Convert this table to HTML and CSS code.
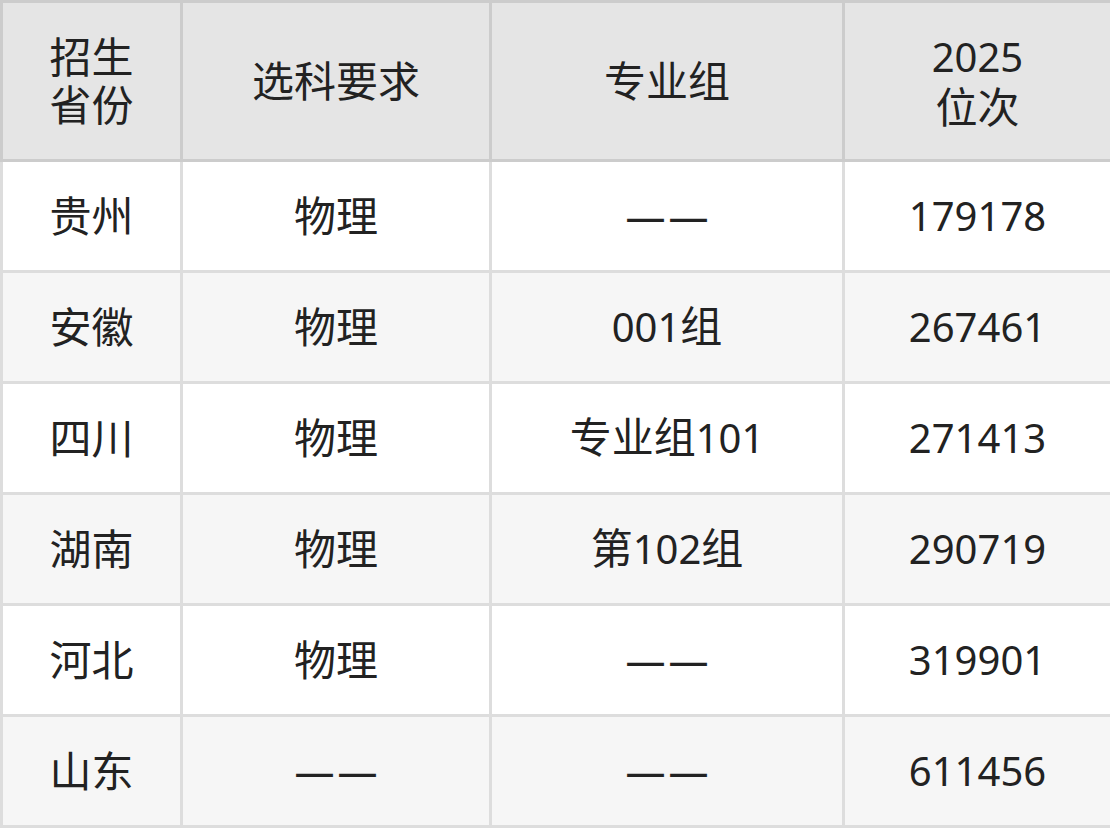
FILE: index.html
```html
<!DOCTYPE html>
<html lang="zh">
<head>
<meta charset="utf-8">
<link rel="stylesheet" href="styles.css">
</head>
<body>
<table class="rank">
  <colgroup>
    <col class="c1"><col class="c2"><col class="c3"><col class="c4">
  </colgroup>
  <thead>
    <tr><th>招生<br>省份</th><th>选科要求</th><th>专业组</th><th><span class="num">2025</span><br>位次</th></tr>
  </thead>
  <tbody>
    <tr><td>贵州</td><td>物理</td><td><span class="dash">——</span></td><td><span class="num">179178</span></td></tr>
    <tr><td>安徽</td><td>物理</td><td><span class="num">001</span>组</td><td><span class="num">267461</span></td></tr>
    <tr><td>四川</td><td>物理</td><td>专业组<span class="num">101</span></td><td><span class="num">271413</span></td></tr>
    <tr><td>湖南</td><td>物理</td><td>第<span class="num">102</span>组</td><td><span class="num">290719</span></td></tr>
    <tr><td>河北</td><td>物理</td><td><span class="dash">——</span></td><td><span class="num">319901</span></td></tr>
    <tr><td>山东</td><td><span class="dash">——</span></td><td><span class="dash">——</span></td><td><span class="num">611456</span></td></tr>
  </tbody>
</table>
</body>
</html>
```
FILE: styles.css
```css
html, body {
  margin: 0;
  padding: 0;
  background: #ffffff;
}
.rank {
  width: 1110px;
  border-collapse: collapse;
  table-layout: fixed;
  font-family: "Noto Sans CJK SC", sans-serif;
  font-size: 42px;
  line-height: 48px;
  color: #222222;
}
.c1 { width: 180px; }
.c2 { width: 309px; }
.c3 { width: 353px; }
.c4 { width: 268px; }
.rank th {
  background: #e5e5e5;
  border: 3px solid #cccccc;
  font-weight: normal;
  height: 152px;
  padding: 0 0 4px;
  text-align: center;
  vertical-align: middle;
}
.rank td {
  border: 3px solid #dddddd;
  height: 104px;
  padding: 0 0 4px;
  text-align: center;
  vertical-align: middle;
}
.rank tbody tr:nth-child(even) td {
  background: #f6f6f6;
}
.num {
  font-family: "Noto Sans", "Noto Sans CJK SC", sans-serif;
  font-size: 40px;
}
.dash {
  font-family: "Noto Sans", sans-serif;
  font-size: 40px;
  letter-spacing: 3px;
  margin-right: -3px;
}
```
